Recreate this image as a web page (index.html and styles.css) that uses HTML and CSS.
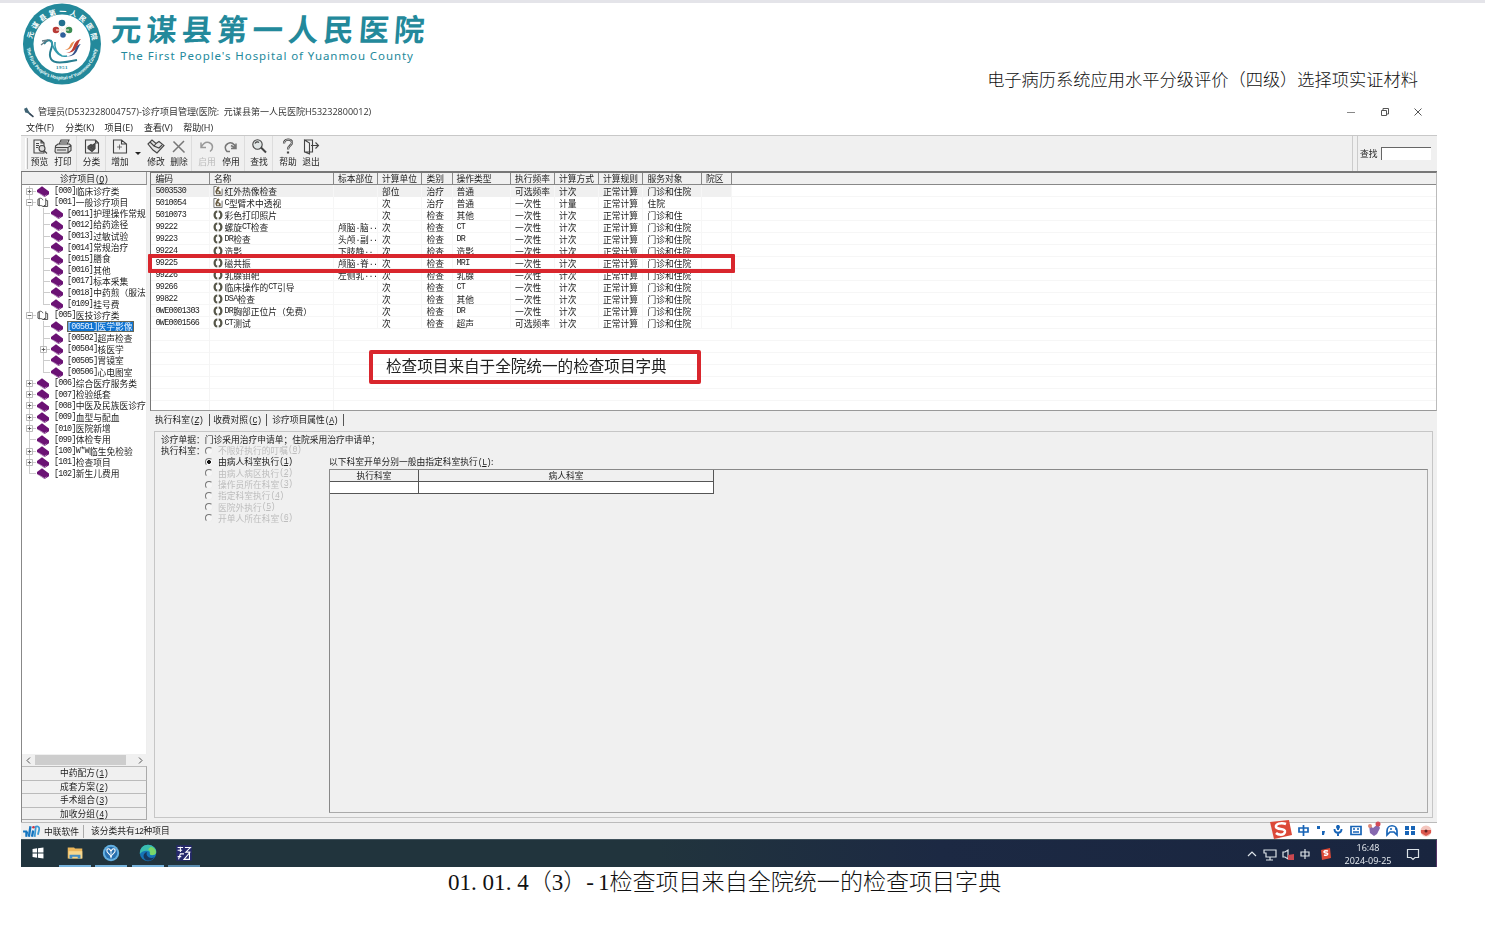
FILE: index.html
```html
<!DOCTYPE html>
<html lang="zh-CN">
<head>
<meta charset="utf-8">
<title>诊疗项目管理</title>
<link rel="stylesheet" href="styles.css">
</head>
<body>
<svg class="defs" width="0" height="0">
  <symbol id="book" viewBox="0 0 12 11"><path d="M0 4 5 .3 12 5.500v2.700L7.600 11 0 6z" fill="#6b1274"/><path d="M1.500 6.800 7.400 10.300l2-1.500" stroke="#d9c4dd" stroke-width=".6" fill="none"/></symbol>
  <symbol id="open" viewBox="0 0 13 11"><path d="M1 2 2.500 1.400V9L1 8.400zM2.500 1C4.500 .5 6 1.500 6.500 3M9.500 1v7.500C8 8.500 7 9 6.500 10 5.500 8.800 4 8.600 2.500 9M9.500 3l2 .5v6.300H6.500" fill="#fff" stroke="#333" stroke-width=".9"/></symbol>
  <symbol id="plus" viewBox="0 0 7 7"><path d="M.5.5h6v6h-6z" fill="#fff" stroke="#aaa" stroke-width=".8"/><path d="M1.700 3.500h3.600M3.500 1.700v3.600" stroke="#555" stroke-width=".9"/></symbol>
  <symbol id="minus" viewBox="0 0 7 7"><path d="M.5.5h6v6h-6z" fill="#fff" stroke="#aaa" stroke-width=".8"/><path d="M1.700 3.500h3.600" stroke="#555" stroke-width=".9"/></symbol>
  <symbol id="scan" viewBox="0 0 10 10"><path d="M4.300.5C2 .5.5 2.500.5 5S2 9.500 4.300 9.500V7.600C3 7.500 2.800 6.500 2.800 5s.3-2.500 1.500-2.600zM5.700.5C8 .5 9.500 2.500 9.500 5S8 9.500 5.700 9.500V7.600C7 7.500 7.200 6.500 7.200 5s-.3-2.500-1.500-2.600z" fill="#555548"/></symbol>
  <symbol id="treat" viewBox="0 0 10 11"><path d="M.5.5h3M.5.5v10h9V3" fill="#fff" stroke="#555" stroke-width=".9"/><path d="M4 1.500 5.500.5 7 2 5 4l3 2v3H3L2 6z" fill="#6d6046"/><path d="M4 6h2v2H4z" fill="#eee"/></symbol>
</svg>

<header class="letterhead">
  <svg class="seal" viewBox="0 0 80 82">
    <defs>
      <path id="arcTop" d="M9.500 42A30.500 31 0 1 1 70.500 42"/>
      <path id="arcBot" d="M4.500 40A35.500 36.500 0 0 0 75.500 40"/>
    </defs>
    <ellipse cx="40" cy="41" rx="39" ry="40.500" fill="#23899b"/>
    <ellipse cx="40" cy="41" rx="28.500" ry="29.500" fill="#fff"/>
    <text class="ring-cn"><textPath href="#arcTop" startOffset="6" textLength="86">元谋县第一人民医院</textPath></text>
    <text class="ring-en"><textPath href="#arcBot" startOffset="5" textLength="102">The First People's Hospital of Yuanmou County</textPath></text>
    <circle cx="40" cy="20" r="3.300" fill="#23708f"/><circle cx="34" cy="27" r="3.300" fill="#b83a36"/><circle cx="47" cy="27" r="3.300" fill="#3a8c52"/><circle cx="41" cy="32" r="2.800" fill="#30609b"/>
    <path d="m36 22 9 10M46 22 36 32M34 27h13" stroke="#f6efe4" stroke-width="1"/>
    <path d="M22 41c4-6 9-4 8 2-1 5-4 8-1 13 3 5 12 4 26 1" fill="none" stroke="#287e91" stroke-width="2"/>
    <path d="M19 42l5-4M20 38l6-1" fill="none" stroke="#657d87" stroke-width="1.300"/>
    <path d="M29 37c2 9 7 18 16 16M33 39c-1 7 2 11 7 14" fill="none" stroke="#319aac" stroke-width="1.500"/>
    <path d="M44 50c10-1 5-12 15-14-4 3-2 14-15 14z" fill="#bd3b32"/><path d="M44 53c11 1 7-11 15-12-4 3-3 14-15 12z" fill="#35528a"/><path d="M43 47c7-2 3-7 10-9-3 3-2 9-10 9z" fill="#e78a4c"/>
    <text class="ring-year" x="40" y="66">1951</text>
  </svg>
  <div class="names">
    <div class="name-cn">元谋县第一人民医院</div>
    <div class="name-en">The First People's Hospital of Yuanmou County</div>
  </div>
  <div class="doc-title">电子病历系统应用水平分级评价（四级）选择项实证材料</div>
</header>

<main class="app">
  <div class="titlebar">
    <svg class="t-ico" viewBox="0 0 10 10"><path d="M1 1.500 3.500.500 5 3.500l4 5.500L4 5.500 2 5z" fill="#3f6374"/><path d="M6 6l3.500 3" stroke="#345" stroke-width="1.300"/></svg>
    <span class="caption">管理员(D532328004757)-诊疗项目管理(医院:&nbsp; 元谋县第一人民医院H53232800012)</span>
    <svg class="win" viewBox="0 0 76 10"><path d="M0 5.500h8" stroke="#888"/><path d="M34.500 3.500h5v5h-5zM36 3.500V1.500h5.500v5.500h-2" fill="none" stroke="#555"/><path d="m67.500 1.500 7 7m0-7-7 7" stroke="#555"/></svg>
  </div>
  <nav class="menubar"><span>文件(F)</span><span>分类(K)</span><span>项目(E)</span><span>查看(V)</span><span>帮助(H)</span></nav>

  <div class="toolbar">
    <div class="grip"></div>
    <div class="tb w23"><svg viewBox="0 0 18 16"><path d="M3 1.500h7l3 3V14.500H3zM10 1.500v3h3M5 5h3M5 7h3M5 9h2" /><circle cx="11" cy="10" r="3" fill="#ddd"/><path d="m13 12 3 3"/></svg><b>预览</b></div>
    <div class="tb w24"><svg viewBox="0 0 18 16"><path d="M5 6 7 1.500h8L13 6M1.500 7.500 4 5.500h11.500L17 7v5l-3 2.500H2L1 13zM1.500 9H14l3-2M14 9v5M3 11.500h9M7 3.500h6" fill="#ddd"/></svg><b>打印</b></div>
    <div class="sep"></div>
    <div class="tb w25"><svg viewBox="0 0 18 16"><path d="M2.500 1.500h10l3 3v10h-13zM12.500 1.500v3h3"/><path d="m5 8 3-2 1 1 3-2v5l-3 3-4-3z" fill="#555"/><path d="m8 9 2-1v2z" fill="#fff"/></svg><b>分类</b></div>
    <div class="sep"></div>
    <div class="tb w24"><svg viewBox="0 0 18 16"><path d="M2.500 1.500h8l5 4v9h-13zM10.500 1.500v4h5"/><path d="M8.500 6v5M6 8.500h5" stroke-width=".7"/></svg><b>增加</b></div>
    <div class="drop"></div>
    <div class="tb w24"><svg viewBox="0 0 18 16"><path d="M1 5.500 5 1.500l4 3.500 3-2 5 4-7 7.500-4-3z" fill="#e5e5e5"/><path d="m3 3.500 4 4 5 2 3-3M7 7.500l2-2.500"/></svg><b>修改</b></div>
    <div class="tb w22"><svg viewBox="0 0 18 16"><path d="m3.500 3 11 11M14 2.500 3 13.500" stroke="#777" stroke-width="1.500"/></svg><b>删除</b></div>
    <div class="sep wide"></div>
    <div class="tb w24 off"><svg viewBox="0 0 18 16"><path d="M3 4v5h5M3 9c2-4 5-6 8-5 5 2 4 7 1 9" stroke-width="1.500"/></svg><b>启用</b></div>
    <div class="tb w24"><svg viewBox="0 0 18 16"><path d="M14 5v5H9M14 9c-2-4-5-6-8-4-4 2-3 6-1 8h3M9 7l5 3" stroke="#777" stroke-width="1.500"/></svg><b>停用</b></div>
    <div class="sep"></div>
    <div class="tb w24"><svg viewBox="0 0 18 16"><circle cx="7.500" cy="6" r="4.700" fill="#e0e5e5"/><path d="M5 5c1-2 3-2 4-1"/><path d="M11 9l5 5" stroke-width="2"/></svg><b>查找</b></div>
    <div class="sep five"></div>
    <div class="tb w24"><svg viewBox="0 0 18 16"><path d="M5 5c0-5 8-5 8-1 0 3-4 3-4 7M9 13v2" stroke-width="2.200"/><path d="M5 5c0-5 8-5 8-1 0 3-4 3-4 7" stroke="#eee" stroke-width=".7"/></svg><b>帮助</b></div>
    <div class="tb w22"><svg viewBox="0 0 18 16"><path d="M2.500 1.500h8v12h-8zM2.500 1.500l5 3v11l-5-2zM9 7h7M13.500 4l3 3-3 3"/></svg><b>退出</b></div>
    <div class="find"><b>查找</b><span class="find-box"></span></div>
  </div>

  <div class="work">
    <aside class="side">
      <div class="side-head">诊疗项目<i>(<u>Q</u>)</i></div>
      <div class="tree">
        <div class="n"><svg class="e"><use href="#plus"/></svg><svg class="k"><use href="#book"/></svg><i>[000]</i>临床诊疗类</div>
        <div class="n"><svg class="e"><use href="#minus"/></svg><svg class="k"><use href="#open"/></svg><i>[001]</i>一般诊疗项目</div>
        <div class="n c"><svg class="k"><use href="#book"/></svg><i>[0011]</i>护理操作常规</div>
        <div class="n c"><svg class="k"><use href="#book"/></svg><i>[0012]</i>给药途径</div>
        <div class="n c"><svg class="k"><use href="#book"/></svg><i>[0013]</i>过敏试验</div>
        <div class="n c"><svg class="k"><use href="#book"/></svg><i>[0014]</i>常规治疗</div>
        <div class="n c"><svg class="k"><use href="#book"/></svg><i>[0015]</i>膳食</div>
        <div class="n c"><svg class="k"><use href="#book"/></svg><i>[0016]</i>其他</div>
        <div class="n c"><svg class="k"><use href="#book"/></svg><i>[0017]</i>标本采集</div>
        <div class="n c"><svg class="k"><use href="#book"/></svg><i>[0018]</i>中药煎（服法</div>
        <div class="n c last"><svg class="k"><use href="#book"/></svg><i>[0109]</i>挂号费</div>
        <div class="n"><svg class="e"><use href="#minus"/></svg><svg class="k"><use href="#open"/></svg><i>[005]</i>医技诊疗类</div>
        <div class="n c"><svg class="k"><use href="#book"/></svg><span class="sel"><i>[00501]</i>医学影像</span></div>
        <div class="n c"><svg class="k"><use href="#book"/></svg><i>[00502]</i>超声检查</div>
        <div class="n c"><svg class="e"><use href="#plus"/></svg><svg class="k"><use href="#book"/></svg><i>[00504]</i>核医学</div>
        <div class="n c"><svg class="k"><use href="#book"/></svg><i>[00505]</i>胃镜室</div>
        <div class="n c last"><svg class="k"><use href="#book"/></svg><i>[00506]</i>心电图室</div>
        <div class="n"><svg class="e"><use href="#plus"/></svg><svg class="k"><use href="#book"/></svg><i>[006]</i>综合医疗服务类</div>
        <div class="n"><svg class="e"><use href="#plus"/></svg><svg class="k"><use href="#book"/></svg><i>[007]</i>检验纸套</div>
        <div class="n"><svg class="e"><use href="#plus"/></svg><svg class="k"><use href="#book"/></svg><i>[008]</i>中医及民族医诊疗</div>
        <div class="n"><svg class="e"><use href="#plus"/></svg><svg class="k"><use href="#book"/></svg><i>[009]</i>血型与配血</div>
        <div class="n"><svg class="e"><use href="#plus"/></svg><svg class="k"><use href="#book"/></svg><i>[010]</i>医院新增</div>
        <div class="n"><svg class="k"><use href="#book"/></svg><i>[099]</i>体检专用</div>
        <div class="n"><svg class="e"><use href="#plus"/></svg><svg class="k"><use href="#book"/></svg><i>[100]W*W</i>临生免检验</div>
        <div class="n"><svg class="e"><use href="#plus"/></svg><svg class="k"><use href="#book"/></svg><i>[101]</i>检查项目</div>
        <div class="n end"><svg class="k"><use href="#book"/></svg><i>[102]</i>新生儿费用</div>
      </div>
      <div class="hscroll"><svg viewBox="0 0 5 7"><path d="M4 .5 1 3.500l3 3"/></svg><span></span><svg viewBox="0 0 5 7"><path d="m1 .5 3 3-3 3"/></svg></div>
      <div class="side-btn">中药配方<i>(<u>1</u>)</i></div>
      <div class="side-btn">成套方案<i>(<u>2</u>)</i></div>
      <div class="side-btn">手术组合<i>(<u>3</u>)</i></div>
      <div class="side-btn">加收分组<i>(<u>4</u>)</i></div>
    </aside>

    <section class="content">
      <div class="list">
        <table class="items">
          <thead><tr><th>编码</th><th>名称</th><th>标本部位</th><th>计算单位</th><th>类别</th><th>操作类型</th><th>执行频率</th><th>计算方式</th><th>计算规则</th><th>服务对象</th><th>院区</th><th></th></tr></thead>
          <tbody>
            <tr class="hl"><td><i>5003530</i></td><td><svg><use href="#treat"/></svg>红外热像检查</td><td></td><td>部位</td><td>治疗</td><td>普通</td><td>可选频率</td><td>计次</td><td>正常计算</td><td>门诊和住院</td><td></td></tr>
            <tr><td><i>5010054</i></td><td><svg><use href="#treat"/></svg><i>C</i>型臂术中透视</td><td></td><td>次</td><td>治疗</td><td>普通</td><td>一次性</td><td>计量</td><td>正常计算</td><td>住院</td><td></td></tr>
            <tr><td><i>5010073</i></td><td><svg><use href="#scan"/></svg>彩色打印照片</td><td></td><td>次</td><td>检查</td><td>其他</td><td>一次性</td><td>计次</td><td>正常计算</td><td>门诊和住</td><td></td></tr>
            <tr><td><i>99222</i></td><td><svg><use href="#scan"/></svg>螺旋<i>CT</i>检查</td><td>颅脑<i>.</i>脑<i>..</i></td><td>次</td><td>检查</td><td><i>CT</i></td><td>一次性</td><td>计次</td><td>正常计算</td><td>门诊和住院</td><td></td></tr>
            <tr><td><i>99223</i></td><td><svg><use href="#scan"/></svg><i>DR</i>检查</td><td>头颅<i>.</i>副<i>..</i></td><td>次</td><td>检查</td><td><i>DR</i></td><td>一次性</td><td>计次</td><td>正常计算</td><td>门诊和住院</td><td></td></tr>
            <tr><td><i>99224</i></td><td><svg><use href="#scan"/></svg>造影</td><td>下肢静<i>..</i></td><td>次</td><td>检查</td><td>造影</td><td>一次性</td><td>计次</td><td>正常计算</td><td>门诊和住院</td><td></td></tr>
            <tr><td><i>99225</i></td><td><svg><use href="#scan"/></svg>磁共振</td><td>颅脑<i>.</i>脊<i>..</i></td><td>次</td><td>检查</td><td><i>MRI</i></td><td>一次性</td><td>计次</td><td>正常计算</td><td>门诊和住院</td><td></td></tr>
            <tr><td><i>99226</i></td><td><svg><use href="#scan"/></svg>乳腺钼靶</td><td>左侧乳<i>...</i></td><td>次</td><td>检查</td><td>乳腺</td><td>一次性</td><td>计次</td><td>正常计算</td><td>门诊和住院</td><td></td></tr>
            <tr><td><i>99266</i></td><td><svg><use href="#scan"/></svg>临床操作的<i>CT</i>引导</td><td></td><td>次</td><td>检查</td><td><i>CT</i></td><td>一次性</td><td>计次</td><td>正常计算</td><td>门诊和住院</td><td></td></tr>
            <tr><td><i>99822</i></td><td><svg><use href="#scan"/></svg><i>DSA</i>检查</td><td></td><td>次</td><td>检查</td><td>其他</td><td>一次性</td><td>计次</td><td>正常计算</td><td>门诊和住院</td><td></td></tr>
            <tr><td><i>0WE0001303</i></td><td><svg><use href="#scan"/></svg><i>DR</i>胸部正位片（免费）</td><td></td><td>次</td><td>检查</td><td><i>DR</i></td><td>一次性</td><td>计次</td><td>正常计算</td><td>门诊和住院</td><td></td></tr>
            <tr><td><i>0WE0001566</i></td><td><svg><use href="#scan"/></svg><i>CT</i>测试</td><td></td><td>次</td><td>检查</td><td>超声</td><td>可选频率</td><td>计次</td><td>正常计算</td><td>门诊和住院</td><td></td></tr>
          </tbody>
        </table>
      </div>

      <div class="tabs"><span>执行科室<i>(<u>Z</u>)</i></span><span>收费对照<i>(<u>C</u>)</i></span><span>诊疗项目属性<i>(<u>A</u>)</i></span></div>

      <div class="panel">
        <div class="line1">诊疗单据：门诊采用治疗申请单；住院采用治疗申请单；</div>
        <div class="exec">
          <div class="exec-label">执行科室：</div>
          <div class="radios">
            <label class="dis"><em></em>不限好执行的叮嘱<i>(<u>0</u>)</i></label>
            <label><em class="on"></em>由病人科室执行<i>(<u>1</u>)</i></label>
            <label class="dis"><em></em>由病人病区执行<i>(<u>2</u>)</i></label>
            <label class="dis"><em></em>操作员所在科室<i>(<u>3</u>)</i></label>
            <label class="dis"><em></em>指定科室执行<i>(<u>4</u>)</i></label>
            <label class="dis"><em></em>医院外执行<i>(<u>5</u>)</i></label>
            <label class="dis"><em></em>开单人所在科室<i>(<u>6</u>)</i></label>
          </div>
          <div class="dept">
            <div class="dept-title">以下科室开单分别一般由指定科室执行<i>(<u>L</u>)</i>:</div>
            <div class="dept-grid">
              <div class="dg-row head"><span>执行科室</span><span>病人科室</span></div>
              <div class="dg-row"><span></span><span></span></div>
            </div>
          </div>
        </div>
      </div>
      <div class="mark"></div>
      <div class="note">检查项目来自于全院统一的检查项目字典</div>
    </section>
  </div>

  <div class="status">
    <svg class="zl" viewBox="0 0 17 12"><path d="M1 6h3v5M5 6l-1 5" fill="none" stroke="#1475c0" stroke-width="1.800"/><path d="M8 1 6.500 11M10.500 5 9.500 11" fill="none" stroke="#1475c0" stroke-width="2.200"/><path d="M13 1.500 12 11M12 2c3-2 5 0 4 3l-1 4" fill="none" stroke="#3d9ad4" stroke-width="1.700"/><circle cx="10.800" cy="2" r="1.200" fill="#c34"/></svg>
    <span class="brand">中联软件</span><span class="count">该分类共有<i>12</i>种项目</span>
    <div class="ime">
      <svg viewBox="0 0 170 20">
        <path d="m3 3 19-2 3 15-18 4z" fill="#dc4938"/><path d="M19 5c-5-2-11 0-10 3s10 1 9 5-7 3-9 1" fill="none" stroke="#fff" stroke-width="2.500"/>
        <g fill="none" stroke="#1764b6" stroke-width="1.700"><path d="M32 9h9v4h-9zM36.500 6v11"/><path d="M71 6v5M67.500 10c0 5 7 5 7 0M71 14v3" stroke-width="1.900"/><path d="M84 7.500h10v8H84zM86 10h2M90 10h2M86 13h6"/><path d="M120 16v-4c0-7 10-7 10 0v4l-3-3h-4zM123 10h2M128 10h1"/></g>
        <path d="M50 7h3v3h-3zM55 12h3l-1 4h-2z" fill="#1764b6"/><circle cx="71" cy="8" r="2" fill="#1764b6"/>
        <path d="m102 6 4 3 5-4 2 4-3 6-3 2-4-3z" fill="#8668af"/><circle cx="111" cy="5" r="2.500" fill="#d44b57"/><circle cx="103" cy="7" r="2" fill="#d87"/>
        <path d="M138 7h4v4h-4zM144 7h4v4h-4zM138 12h4v4h-4zM144 12h4v4h-4z" fill="#1764b6"/>
        <circle cx="159" cy="12" r="5.500" fill="#f4c5bd"/><path d="M154 11h10v3l-5 3-5-3z" fill="#db574d"/><circle cx="159" cy="12" r="1.500" fill="#622"/>
      </svg>
    </div>
  </div>

  <div class="taskbar">
    <div class="tk"><svg viewBox="0 0 22 22"><path d="m5 6.500 5-.7V10.500H5zM11 5.700l6-.7v5.500h-6zM5 11.500h5v4.700l-5-.7zM11 11.500h6V17l-6-.8z" fill="#fff"/></svg></div>
    <div class="tk run"><svg viewBox="0 0 22 22"><path d="M3 5h7l1 1h8v11H3z" fill="#edb75b"/><path d="M4 9h15v8H4z" fill="#f7d78d"/><path d="M5 13h12v4h-3v-2H8v2H5z" fill="#438dc4"/></svg></div>
    <div class="tk run"><svg viewBox="0 0 22 22"><circle cx="11" cy="11" r="9" fill="#63afe0"/><circle cx="11" cy="11" r="6.800" fill="#286fae"/><path d="M6.500 7.500c-1 4 4 4 4.500 8 .5-4 5.500-4 4.500-8-1.500-2.500-4-.5-4.500 2-.500-2.500-3-4.500-4.500-2z" fill="#286fae" stroke="#fff" stroke-width="1.200"/><path d="M11 10v7" stroke="#e7f6ff"/></svg></div>
    <div class="tk run"><svg viewBox="0 0 22 22"><circle cx="11" cy="11" r="9" fill="#1674b7"/><path d="M2 12C2 5 6 2 11 2c6 0 10 5 9 9-1 3-6 3-7 1 1-4-7-5-11 0z" fill="#39bcb0"/><path d="M14 4c5 1 7 6 5 8-2 2-6 1-6 0 1-2 0-4-2-5z" fill="#7bd768"/><path d="M10 10c-2 4 2 8 8 6-2 3-6 4-9 3-4-2-4-8 1-9z" fill="#16375e"/></svg></div>
    <div class="tk run dim"><svg viewBox="0 0 22 22"><path d="M2.500 2.500h17v17h-17z" fill="#26296c"/><path d="M4 5h6M4 8h5M7 4v6M12 5h6l-5 5h5M5 18l2-6h4M11 18l6-7v7zM4 15h4" fill="none" stroke="#fff" stroke-width="1.200"/></svg></div>
    <div class="tray">
      <svg viewBox="0 0 90 20"><g fill="none" stroke="#dce3e8" stroke-width="1.200"><path d="m2 12 4-4 4 4M18 6h12v7H20v-4h-2zM24 13v3M20 16h7M37 8h2l3-2v9l-3-2h-2zM55 8h8v4h-8zM59 5v10"/></g><path d="m42 11 6-1v6h-6z" fill="#c94850"/><path d="m75 6 9-2 1 10-9 2z" fill="#dd4b38"/><path d="M82 7c-5-1-5 2-2 2s2 3-2 2" fill="none" stroke="#fff" stroke-width="1.400"/></svg>
      <div class="clock"><span>16:48</span><span>2024-09-25</span></div>
      <svg class="bell" viewBox="0 0 14 14"><path d="M1.500 2.500h11v8H9L7 12.500 5 10.500H1.500z" fill="none" stroke="#dce3e8" stroke-width="1.200"/></svg>
    </div>
  </div>
</main>

<p class="figure"><i>01</i><i class="dot">.</i><i>01</i><i class="dot">.</i><i>4</i>（<i>3</i>）<i class="dash">-</i><i>1</i>检查项目来自全院统一的检查项目字典</p>
</body>
</html>
```
FILE: styles.css
```css
* { box-sizing: border-box; }
html, body { margin: 0; background: #fff; }
body {
  width: 1485px; height: 938px; overflow: hidden;
  border-top: 3px solid #e4e4e9;
  font-family: "Noto Sans CJK SC", sans-serif; color: #222;
  display: flex; flex-direction: column;
}
.defs { position: absolute; }
i { font-style: normal; }

/* Letterhead */
.letterhead { display: flex; height: 99px; flex: none; padding-left: 22px; color: #23899b; }
.seal { width: 80px; height: 82px; overflow: visible; }
.ring-cn { font: bold 7px "Noto Sans CJK SC", sans-serif; fill: #fff; }
.ring-en { font: bold 4.6px "Noto Sans", sans-serif; fill: #e4f5f6; }
.ring-year { font: bold 5px "Liberation Serif", serif; fill: #23899b; text-anchor: middle; letter-spacing: .5px; }
.names { width: 420px; padding: 7px 0 0 9px; }
.name-cn { font-size: 30.5px; font-weight: 700; line-height: 36px; height: 38px; letter-spacing: 4.9px; white-space: nowrap; transform: skewX(-4deg); }
.name-en { margin: 0 0 0 10px; font: 11.5px/16px "Noto Sans", sans-serif; letter-spacing: .92px; white-space: nowrap; }
.doc-title { margin-left: auto; padding: 63px 67px 0 0; font-size: 17.24px; font-weight: 300; line-height: 26px; color: #111; white-space: nowrap; }

/* Application window */
.app { width: 1416px; height: 765px; flex: none; margin-left: 21px; background: #f0f0f0; display: flex; flex-direction: column; font-size: 8.75px; line-height: 12px; white-space: nowrap; filter: blur(.3px); }
.app i { font-family: "Liberation Mono", monospace; font-size: 8.4px; letter-spacing: -.665px; line-height: 1; }
.app b { font-weight: 400; }
.titlebar { height: 20px; background: #fff; display: flex; align-items: center; padding-left: 2px; }
.t-ico { width: 11px; height: 11px; }
.caption { font: 9.04px/12px "Open Sans", "Noto Sans CJK SC", sans-serif; margin-left: 4px; color: #333; }
.win { width: 76px; height: 10px; margin: 0 14px 0 auto; }
.menubar { height: 13px; background: #fff; display: flex; padding-left: 5px; font-family: "Open Sans", "Noto Sans CJK SC", sans-serif; font-size: 9px; line-height: 11px; }
.menubar span { width: 39.3px; }

.toolbar { height: 37px; border-top: 1px solid #c8c8c8; border-bottom: 1px solid #777; display: flex; align-items: stretch; }
.grip { width: 3px; margin: 2px 0 2px 4px; border-left: 1px solid #fff; border-right: 1px solid #bbb; }
.tb { display: flex; flex-direction: column; align-items: center; padding-top: 2px; }
.tb svg { width: 18px; height: 17px; fill: none; stroke: #444; stroke-width: 1.1; }
.tb b, .find b { font-size: 8.75px; line-height: 13px; color: #222; }
.tb.off b { color: #bbb; }
.off svg { stroke: #999; }
.w22 { width: 22px; } .w23 { width: 23px; } .w24 { width: 24px; } .w25 { width: 25px; }
.sep { width: 4px; background: linear-gradient(90deg, transparent 1px, #ddd 1px, #ddd 2px, transparent 2px); }
.sep.five, .sep.wide { width: 5px; }
.drop { align-self: flex-start; width: 6px; height: 6px; margin: 16px 3px 0; border: 3px solid transparent; border-top-color: #222; }
.find { margin-left: auto; width: 85px; border-left: 1px solid #ccc; display: flex; align-items: center; padding-left: 7px; box-shadow: inset 4px 0 #f0f0f0, inset 5px 0 #ccc; }
.find-box { width: 50px; height: 13px; margin-left: 3px; background: #fff; border-left: 1px solid #666; border-top: 1px solid #666; }

.work { display: flex; height: 650px; }
.side { width: 126px; border-left: 1px solid #888; display: flex; flex-direction: column; }
.side-head { height: 13px; text-align: center; line-height: 13px; border-bottom: 1px solid #888; border-right: 1px solid #999; }
.tree { height: 569px; background: #fff; border-right: 1px solid #eee; padding-top: .5px; overflow: hidden; }
.n { position: relative; height: 11.32px; line-height: 11.32px; display: flex; align-items: center; padding-left: 15px; background: linear-gradient(#ccc, #ccc) 7px 0 / 1px 100% no-repeat, linear-gradient(#ccc, #ccc) 7px 5px / 7px 1px no-repeat; }
.n .k { width: 12px; height: 11px; margin-right: 5px; flex: none; }
.n .e { position: absolute; left: 4px; top: 2px; width: 7px; height: 7px; }
.n.c { padding-left: 29px; background: linear-gradient(#ccc, #ccc) 7px 0 / 1px 100% no-repeat, linear-gradient(#ccc, #ccc) 21px 0 / 1px 100% no-repeat, linear-gradient(#ccc, #ccc) 21px 5px / 7px 1px no-repeat; }
.n.c .e { left: 18px; }
.n.c.last { background-size: 1px 100%, 1px 50%, 7px 1px; }
.n.end { background-size: 1px 50%, 7px 1px; }
.n.c .k { margin-right: 4px; }
.sel { display: flex; align-items: center; background: #0f74d2; color: #e8f3ff; outline: 1px solid #665; outline-offset: -1px; padding-right: 1px; height: 11px; line-height: 11px; }
.hscroll { height: 12px; display: flex; align-items: center; padding: 0 4px; justify-content: space-between; }
.hscroll svg { width: 5px; height: 7px; fill: none; stroke: #555; }
.hscroll span { width: 91px; height: 10px; background: #cdcdcd; margin-right: 8px; }
.side-btn { height: 13.5px; line-height: 12px; text-align: center; border-top: 1px solid #bbb; border-right: 1px solid #aaa; }
.side-btn:last-child { border-bottom: 1px solid #aaa; }

.content { position: relative; flex: 1; padding-left: 3px; }
.list { height: 239px; border-left: 1.5px solid #777; border-top: 1px solid #777; border-bottom: 1px solid #999; border-right: 1px solid #bbb;
  background: repeating-linear-gradient(#fff 0 11px, #f6f6f6 11px 12px) 0 12px no-repeat, #fff; }
.items, .items thead, .items tbody { display: block; }
.items tr { display: flex; height: 12px; }
.items { font-size: 8.75px; background:
  linear-gradient(#f4f4f4, #f4f4f4) 58px 0 / 1px 100% no-repeat, linear-gradient(#f4f4f4, #f4f4f4) 182px 0 / 1px 100% no-repeat;
  height: 237px; }
th, td { display: flex; align-items: center; flex: none; width: 44px; padding: 0 0 0 4.5px; height: 12px; line-height: 11px; font-weight: 400; white-space: nowrap; border-right: 1px solid #f6f6f6; }
th { background: #f0f0f0; border-right: 1px solid #888; border-bottom: 1px solid #888; }
th:last-child { flex: 1; border-right: 0; }
tr > :nth-child(1) { width: 58.5px; }
tr > :nth-child(2) { width: 124px; }
tr > :nth-child(5) { width: 31px; padding-left: 5px; }
tr > :nth-child(6) { width: 58px; padding-left: 4px; }
tr > :nth-child(10) { width: 59px; padding-left: 5px; }
tr > :nth-child(11) { width: 30px; }
td:nth-child(2) { padding-left: 3px; }
td svg { width: 10px; height: 10px; margin-right: 2px; flex: none; }
.hl td { background: #f0f0f0; }

.tabs { display: flex; height: 20px; padding: 3px 0 0 5px; }
.tabs span { border-right: 1.5px solid #555; height: 12px; padding-right: 6px; margin-right: 3px; }
.tabs span + span { padding-right: 5px; margin-right: 5px; }

.panel { height: 387px; margin: 0 4px; border: 1px solid #c6c6c6; padding: 2px 4px 4px 6px; }
.line1 { height: 11px; line-height: 12px; }
.exec { display: flex; height: 368px; }
.exec-label { width: 44px; line-height: 11px; }
.radios { width: 124px; }
.radios label { display: flex; align-items: center; height: 11.3px; line-height: 11px; }
.radios em { width: 8px; height: 8px; border: 1px solid; border-color: #777 #eee #eee #777; border-radius: 50%; margin-right: 5px; background: #f6f6f6; }
.radios em.on { background: radial-gradient(#111 0 1.7px, #fff 2.2px); }
.dis { color: #bdbdbd; }
.dept { flex: 1; padding-top: 11px; }
.dept-title { height: 13px; }
.dept-grid { height: 344px; border: 1.5px solid #888; border-right-color: #aaa; border-bottom-color: #aaa; }
.dg-row { display: flex; width: 384px; height: 12px; border-bottom: 1px solid #555; border-right: 1px solid #555; background: #fff; text-align: center; line-height: 12px; }
.dg-row.head { background: #f0f0f0; }
.dg-row span { width: 89px; border-right: 1px solid #555; }
.dg-row span + span { flex: 1; border-right: 0; }
.mark { position: absolute; left: 1px; top: 82px; width: 587px; height: 19px; border: 4px solid #d9262d; border-radius: 1px; }
.note { position: absolute; left: 222px; top: 178px; width: 332px; height: 34px; border: 4.5px solid #d9262d; border-radius: 2px; padding-left: 13px; font-size: 15.6px; line-height: 23px; color: #222; }

.status { height: 17px; border-top: 1px solid #bbb; display: flex; align-items: center; padding-left: 1px; }
.zl { width: 18px; height: 13px; }
.brand { margin-left: 4px; padding-right: 4px; border-right: 1px solid #aaa; line-height: 13px; }
.count { margin-left: 7px; }
.ime { margin-left: auto; width: 169px; height: 17px; background: linear-gradient(90deg, transparent 12px, #fff 12px); }
.ime svg { width: 170px; height: 20px; margin: -4px 0 0 -1px; display: block; position: relative; z-index: 2; }

.taskbar { flex: 1; background: linear-gradient(90deg, #21343d 0%, #21343d 45%, #1c2943 65%, #19253f); display: flex; align-items: stretch; padding-left: 1px; border-top: 1px solid #40525c; }
.tk { width: 32px; margin-right: 4.5px; display: flex; justify-content: center; padding-top: 3px; }
.tk svg { width: 20px; height: 20px; }
.run { border-bottom: 2px solid #76b3dd; }
.run.dim { border-color: #5a8caf; }
.tray { margin-left: auto; display: flex; align-items: center; color: #e8edf2; width: 191px; border-right: 1px solid #536; }
.tray > svg:first-child { width: 90px; height: 20px; }
.clock { width: 64px; display: flex; flex-direction: column; align-items: center; font: 9px/13px "Open Sans", sans-serif; }
.tray .bell { width: 14px; height: 14px; margin-left: 6px; }

.figure { margin: -2px 0 0 448px; font-size: 23.05px; line-height: 30px; font-weight: 300; color: #111; white-space: nowrap; }
.figure i { font-family: "Liberation Serif", serif; }
.figure .dot { letter-spacing: 5.76px; }
.figure .dash { letter-spacing: 3.85px; }
```
